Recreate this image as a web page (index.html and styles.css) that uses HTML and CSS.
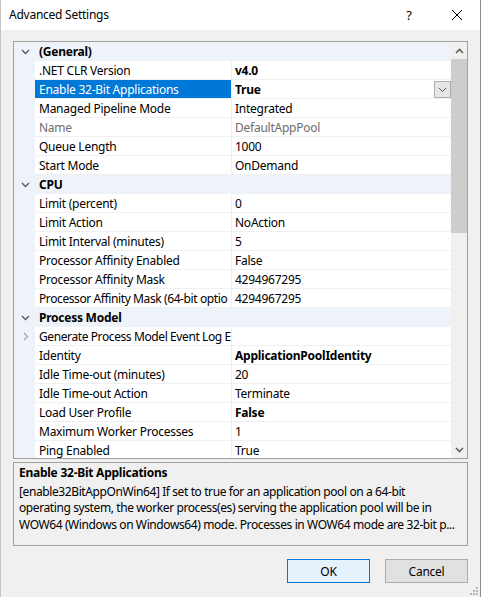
FILE: index.html
```html
<!DOCTYPE html>
<html>
    <head>
        <title>Advanced Settings</title>
        <link rel="stylesheet" href="styles.css">
    </head>
    <body>
        <div class="window">
            <div class="titlebar">
                <span class="title">Advanced Settings</span>
                <span class="help">?</span>
                <span class="close">
                    <svg width="12" height="12" viewBox="0 0 12 12"><path d="M1 1L11 11M11 1L1 11" stroke="#000" stroke-width="1"/></svg>
                </span>
            </div>
            <div class="content">
                <div class="grid">
                    <div class="rows">
                        <div class="cat"><span class="margin"><svg width="9" height="6" viewBox="0 0 9 6"><path d="M1 1L4.5 4.5L8 1" fill="none" stroke="#555" stroke-width="1.3"/></svg></span><span class="cat-name">(General)</span></div>
                        <div class="row"><span class="margin"></span><span class="name">.NET CLR Version</span><span class="value bold">v4.0</span></div>
                        <div class="row selected"><span class="margin"></span><span class="name">Enable 32-Bit Applications</span><span class="value bold">True<span class="dropdown"><svg width="9" height="6" viewBox="0 0 9 6"><path d="M1 1L4.5 4.5L8 1" fill="none" stroke="#555" stroke-width="1"/></svg></span></span></div>
                        <div class="row"><span class="margin"></span><span class="name">Managed Pipeline Mode</span><span class="value">Integrated</span></div>
                        <div class="row disabled"><span class="margin"></span><span class="name">Name</span><span class="value">DefaultAppPool</span></div>
                        <div class="row"><span class="margin"></span><span class="name">Queue Length</span><span class="value">1000</span></div>
                        <div class="row"><span class="margin"></span><span class="name">Start Mode</span><span class="value">OnDemand</span></div>
                        <div class="cat"><span class="margin"><svg width="9" height="6" viewBox="0 0 9 6"><path d="M1 1L4.5 4.5L8 1" fill="none" stroke="#555" stroke-width="1.3"/></svg></span><span class="cat-name">CPU</span></div>
                        <div class="row"><span class="margin"></span><span class="name">Limit (percent)</span><span class="value">0</span></div>
                        <div class="row"><span class="margin"></span><span class="name">Limit Action</span><span class="value">NoAction</span></div>
                        <div class="row"><span class="margin"></span><span class="name">Limit Interval (minutes)</span><span class="value">5</span></div>
                        <div class="row"><span class="margin"></span><span class="name">Processor Affinity Enabled</span><span class="value">False</span></div>
                        <div class="row"><span class="margin"></span><span class="name">Processor Affinity Mask</span><span class="value">4294967295</span></div>
                        <div class="row"><span class="margin"></span><span class="name tight">Processor Affinity Mask (64-bit optio</span><span class="value">4294967295</span></div>
                        <div class="cat"><span class="margin"><svg width="9" height="6" viewBox="0 0 9 6"><path d="M1 1L4.5 4.5L8 1" fill="none" stroke="#555" stroke-width="1.3"/></svg></span><span class="cat-name">Process Model</span></div>
                        <div class="row"><span class="margin"><svg width="6" height="9" viewBox="0 0 6 9"><path d="M1 1L4.5 4.5L1 8" fill="none" stroke="#a0a0a0" stroke-width="1.2"/></svg></span><span class="name tight">Generate Process Model Event Log E</span><span class="value"></span></div>
                        <div class="row"><span class="margin"></span><span class="name">Identity</span><span class="value bold">ApplicationPoolIdentity</span></div>
                        <div class="row"><span class="margin"></span><span class="name">Idle Time-out (minutes)</span><span class="value">20</span></div>
                        <div class="row"><span class="margin"></span><span class="name">Idle Time-out Action</span><span class="value">Terminate</span></div>
                        <div class="row"><span class="margin"></span><span class="name">Load User Profile</span><span class="value bold">False</span></div>
                        <div class="row"><span class="margin"></span><span class="name">Maximum Worker Processes</span><span class="value">1</span></div>
                        <div class="row"><span class="margin"></span><span class="name">Ping Enabled</span><span class="value">True</span></div>
                    </div>
                    <div class="scrollbar">
                        <div class="arrow">
                            <svg width="9" height="6" viewBox="0 0 9 6"><path d="M1 5L4.5 1.5L8 5" fill="none" stroke="#606060" stroke-width="1.6"/></svg>
                        </div>
                        <div class="track"><div class="thumb"></div></div>
                        <div class="arrow">
                            <svg width="9" height="6" viewBox="0 0 9 6"><path d="M1 1L4.5 4.5L8 1" fill="none" stroke="#606060" stroke-width="1.6"/></svg>
                        </div>
                    </div>
                </div>
                <div class="desc">
                    <div class="desc-title">Enable 32-Bit Applications</div>
                    <div class="desc-text">[enable32BitAppOnWin64] If set to true for an application pool on a 64-bit</div>
                    <div class="desc-text">operating system, the worker process(es) serving the application pool will be in</div>
                    <div class="desc-text">WOW64 (Windows on Windows64) mode. Processes in WOW64 mode are 32-bit p...</div>
                </div>
                <div class="buttons">
                    <button class="btn default">OK</button>
                    <button class="btn">Cancel</button>
                </div>
            </div>
            <svg class="grip" width="12" height="12" viewBox="0 0 12 12">
                <rect x="9" y="3" width="2" height="2" fill="#b8b8b8"/>
                <rect x="6" y="6" width="2" height="2" fill="#b8b8b8"/>
                <rect x="9" y="6" width="2" height="2" fill="#b8b8b8"/>
                <rect x="3" y="9" width="2" height="2" fill="#b8b8b8"/>
                <rect x="6" y="9" width="2" height="2" fill="#b8b8b8"/>
                <rect x="9" y="9" width="2" height="2" fill="#b8b8b8"/>
            </svg>
        </div>
    </body>
</html>
```
FILE: styles.css
```css
body, html {
    margin: 0;
    padding: 0;
}
body {
    font-family: "Noto Sans", "Open Sans", sans-serif;
    font-size: 12px;
    letter-spacing: -0.25px;
    color: #000;
    background: #f0f0f0;
}

.window {
    position: relative;
    width: 481px;
    height: 597px;
    box-sizing: border-box;
    border-left: 1px solid #c4c4c4;
    border-right: 1px solid #8c8c8c;
    background-color: #f0f0f0;
    overflow: hidden;
}

.titlebar {
    height: 30px;
    background-color: #fff;
    display: flex;
    align-items: center;
    padding-left: 8px;
}
.title {
    flex: 1;
    font-size: 12px;
    padding-bottom: 1px;
}
.help {
    width: 46px;
    text-align: center;
    font-size: 13px;
    margin-right: 2px;
}
.close {
    width: 46px;
    display: flex;
    justify-content: center;
}

.content {
    padding: 11px 12px 0 12px;
}

.grid {
    height: 418px;
    box-sizing: border-box;
    border: 1px solid #a0a0a0;
    display: flex;
    background-color: #fff;
    overflow: hidden;
}
.rows {
    flex: 1;
    overflow: hidden;
}
.row, .cat {
    display: grid;
    grid-template-columns: 21px 197px 1fr;
    height: 19px;
    line-height: 20px;
}
.cat {
    background-color: #eef3fa;
    font-weight: bold;
}
.cat-name {
    grid-column: 2 / 4;
    padding-left: 4px;
}
.margin {
    background-color: #eef3fa;
    display: flex;
    align-items: center;
    justify-content: center;
    padding-left: 2px;
}
.name, .value {
    border-bottom: 1px solid #f0f0f0;
    white-space: nowrap;
    overflow: hidden;
    text-overflow: clip;
}
.name {
    padding-left: 4px;
    border-right: 1px solid #f0f0f0;
}
.name.tight {
    letter-spacing: -0.4px;
}
.value {
    padding-left: 3px;
    position: relative;
}
.bold {
    font-weight: bold;
}
.disabled .name, .disabled .value {
    color: #6d6d6d;
}
.selected .name {
    background-color: #0078d7;
    color: #fff;
}
.dropdown {
    position: absolute;
    right: 0;
    top: 1px;
    width: 17px;
    height: 17px;
    box-sizing: border-box;
    border: 1px solid #adadad;
    background-color: #e6e6e6;
    display: flex;
    align-items: center;
    justify-content: center;
}

.scrollbar {
    width: 16px;
    background-color: #f0f0f0;
    display: flex;
    flex-direction: column;
}
.arrow {
    height: 17px;
    display: flex;
    align-items: center;
    justify-content: center;
}
.track {
    flex: 1;
}
.thumb {
    height: 174px;
    background-color: #cdcdcd;
}

.desc {
    margin-top: 3px;
    height: 84px;
    box-sizing: border-box;
    border: 1px solid #a0a0a0;
    padding: 2px 5px 0 5px;
    line-height: 16.5px;
    white-space: nowrap;
    overflow: hidden;
}
.desc-title {
    font-weight: bold;
    margin-bottom: 2px;
}
.desc-text {
    letter-spacing: -0.4px;
}

.buttons {
    display: flex;
    justify-content: flex-end;
    gap: 15px;
    margin-top: 13px;
}
.btn {
    width: 83px;
    height: 24px;
    font-family: inherit;
    font-size: 12px;
    letter-spacing: inherit;
    color: #000;
    background-color: #e1e1e1;
    border: 1px solid #adadad;
    padding: 0;
}
.btn.default {
    background-color: #e5f1fb;
    border-color: #0078d7;
}

.grip {
    position: absolute;
    right: 1px;
    bottom: 1px;
}
```
